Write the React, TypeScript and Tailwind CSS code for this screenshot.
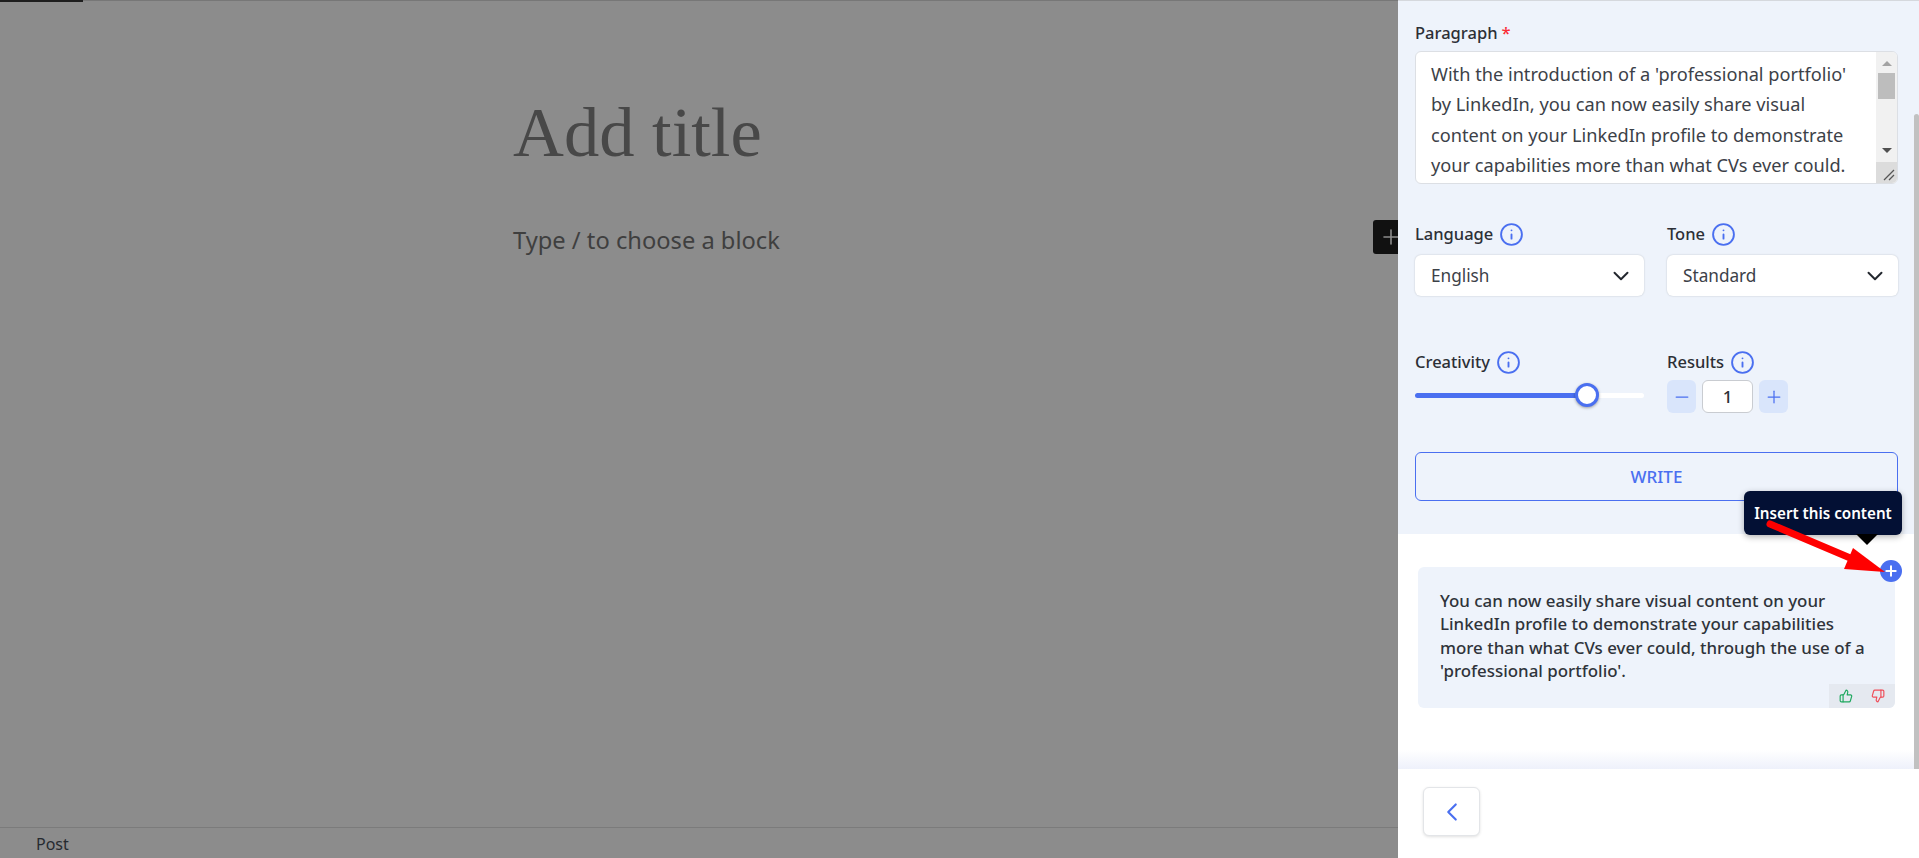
import { ChevronDown, ChevronLeft, Info, Minus, Plus, ThumbsDown, ThumbsUp } from "lucide-react";

const FieldLabel = ({ text }: { text: string }) => (
  <div className="flex h-6 items-center gap-[6px] text-[16.5px] font-medium text-[#2c2f36]">
    {text}
    <Info size={25} strokeWidth={1.8} className="text-[#4a6ff0]" />
  </div>
);

const Select = ({ value }: { value: string }) => (
  <div className="mt-[9px] flex h-[41px] items-center justify-between rounded-md bg-white pl-4 pr-[10px] text-[17.2px] text-[#3c4148] shadow-[0_0_2px_rgba(0,0,0,0.2)]">
    {value}
    <ChevronDown size={26} strokeWidth={1.8} className="text-[#23272e]" />
  </div>
);

export default function App() {
  return (
    <div className="relative flex h-screen w-full overflow-hidden bg-[#8c8c8c] font-['Noto_Sans',sans-serif]">
      {/* Dimmed editor */}
      <main className="relative flex min-w-0 flex-1 flex-col border-t border-[#777777]">
        <div className="absolute -top-px left-0 h-[2px] w-[83px] bg-[#1e1e1e]" />
        <div className="flex-1 pl-[513px] pt-[85px]">
          <h1 className="h-[92px] font-['Liberation_Serif',serif] text-[70.5px] font-normal leading-[92px] text-[#484848]">Add title</h1>
          <p className="mt-[46px] text-[23.7px] leading-[32px] text-[#3f3f3f]">Type / to choose a block</p>
        </div>
        <div className="absolute right-0 top-[219px] flex h-[34px] w-[25px] items-center justify-start rounded-l-[3px] bg-[#111111] pl-[6px]">
          <Plus size={24} strokeWidth={1.6} className="shrink-0 text-[#8c8c8c]" />
        </div>
        <footer className="flex h-[31px] items-center border-t border-[#7b7b7b] pl-[36px] pt-[2px] text-[16px] text-[#262a30]">Post</footer>
      </main>

      {/* Writer sidebar */}
      <aside className="relative flex w-[521px] shrink-0 flex-col bg-white">
        <div className="flex-1 overflow-hidden">
          <section className="h-[534px] border-t border-[#d5d8dd] bg-[#eef3fb] pl-[17px] pr-[21px] pt-[20px]">
            <div className="flex h-6 items-center gap-1 text-[16.5px] font-medium text-[#2c2f36]">
              Paragraph <span className="text-red-500">*</span>
            </div>
            <div className="mt-[6px] flex h-[133px] overflow-hidden rounded-md border border-[#dcdfe4] bg-white">
              <p className="flex-1 pl-[15px] pr-[16px] pt-[7px] text-[18.2px] leading-[30.3px] text-[#3c4148]">
                With the introduction of a 'professional portfolio' by LinkedIn, you can now easily share visual content on your LinkedIn profile to demonstrate your capabilities more than what CVs ever could.
              </p>
              <div className="flex w-[21px] shrink-0 flex-col items-center bg-[#f1f1f1]">
                <div className="mt-[9px] h-0 w-0 border-x-[5px] border-b-[5px] border-x-transparent border-b-[#a3a3a3]" />
                <div className="mt-[7px] h-[26px] w-[17px] bg-[#bdbdbd]" />
                <div className="mt-[49px] h-0 w-0 border-x-[5px] border-t-[5px] border-x-transparent border-t-[#505050]" />
                <div className="mt-auto flex h-[21px] w-full items-end justify-end bg-[#dcdcdc] p-[2px]">
                  <svg width="12" height="12" viewBox="0 0 12 12" stroke="#555555" strokeWidth="1.3">
                    <path d="M1 11 11 1M6 11l5-5" />
                  </svg>
                </div>
              </div>
            </div>

            <div className="mt-[38px] grid grid-cols-[229px_231px] gap-x-[23px]">
              <div>
                <FieldLabel text="Language" />
                <Select value="English" />
              </div>
              <div>
                <FieldLabel text="Tone" />
                <Select value="Standard" />
              </div>
            </div>

            <div className="mt-[54px] grid grid-cols-[229px_231px] gap-x-[23px]">
              <div>
                <FieldLabel text="Creativity" />
                <div className="relative mt-[19px] h-[5px] rounded-full bg-white">
                  <div className="h-full w-[172px] rounded-full bg-[#4a6ff0]" />
                  <div className="absolute left-[160px] top-[-10px] h-6 w-6 rounded-full border-[3px] border-[#4a6ff0] bg-white shadow-[0_1px_3px_rgba(0,0,0,0.35)]" />
                </div>
              </div>
              <div>
                <FieldLabel text="Results" />
                <div className="mt-[6px] flex h-[33px] items-stretch gap-[6px]">
                  <div className="flex w-[29px] items-center justify-center rounded-md bg-[#d9e5fb]">
                    <Minus size={20} strokeWidth={1.5} className="text-[#4a6ff0]" />
                  </div>
                  <div className="flex w-[51px] items-center justify-center rounded-md border border-[#c9ccd1] bg-white text-[17px] font-medium text-[#2c2f36]">1</div>
                  <div className="flex w-[29px] items-center justify-center rounded-md bg-[#d9e5fb]">
                    <Plus size={20} strokeWidth={1.5} className="text-[#4a6ff0]" />
                  </div>
                </div>
              </div>
            </div>

            <button className="mt-[39px] h-[49px] w-full rounded-md border border-[#4a6ff0] text-[17px] font-medium text-[#4a6ff0]">WRITE</button>
          </section>

          <section className="pl-[20px] pr-[24px] pt-[33px]">
            <div className="flex h-[141px] flex-col overflow-hidden rounded-md bg-[#eef3fb]">
              <p className="px-[22px] pt-[22px] text-[16.9px] font-medium leading-[23.3px] text-[#2f333a]">
                You can now easily share visual content on your LinkedIn profile to demonstrate your capabilities more than what CVs ever could, through the use of a 'professional portfolio'.
              </p>
              <div className="mt-auto flex h-6 w-[66px] items-center justify-between self-end bg-[#e5e9f0] px-[10px]">
                <ThumbsUp size={14} className="text-[#1fa85f]" />
                <ThumbsDown size={14} className="text-[#ef4f5b]" />
              </div>
            </div>
          </section>
        </div>

        <div className="h-[19px] shrink-0 bg-gradient-to-b from-white to-[#eef1fb]" />
        <footer className="h-[89px] shrink-0 bg-white pl-[25px] pt-[18px]">
          <button className="flex h-[49px] w-[57px] items-center justify-center rounded-md border border-[#e3e5e8] bg-white shadow-[0_1px_3px_rgba(0,0,0,0.12)]">
            <ChevronLeft size={30} strokeWidth={1.7} className="text-[#4a6ff0]" />
          </button>
        </footer>

        {/* Page scrollbar */}
        <div className="absolute right-0 top-[114px] h-[655px] w-[5px] rounded-t-sm bg-[#c1c1c1]" />

        {/* Tooltip and insert button */}
        <div className="absolute left-[346px] top-[491px] flex h-[44px] w-[158px] items-center justify-center rounded-md bg-[#031034] text-[15.2px] font-semibold text-white shadow-[0_2px_6px_rgba(0,0,0,0.3)]">
          Insert this content
          <div className="absolute left-[112px] top-[43px] h-0 w-0 border-x-[11px] border-t-[11px] border-x-transparent border-t-black" />
        </div>
        <div className="absolute left-[482px] top-[560px] flex h-[22px] w-[22px] items-center justify-center rounded-full bg-[#4a6ff0]">
          <Plus size={16} strokeWidth={3} className="text-white" />
        </div>
      </aside>

      {/* Red annotation arrow */}
      <svg className="pointer-events-none absolute left-[1760px] top-[515px]" width="130" height="65" viewBox="0 0 130 65">
        <path d="M10 9 102 48" stroke="#ff0000" strokeWidth="7" strokeLinecap="round" />
        <path d="M93 33 125 57 84 54Z" fill="#ff0000" />
      </svg>
    </div>
  );
}
